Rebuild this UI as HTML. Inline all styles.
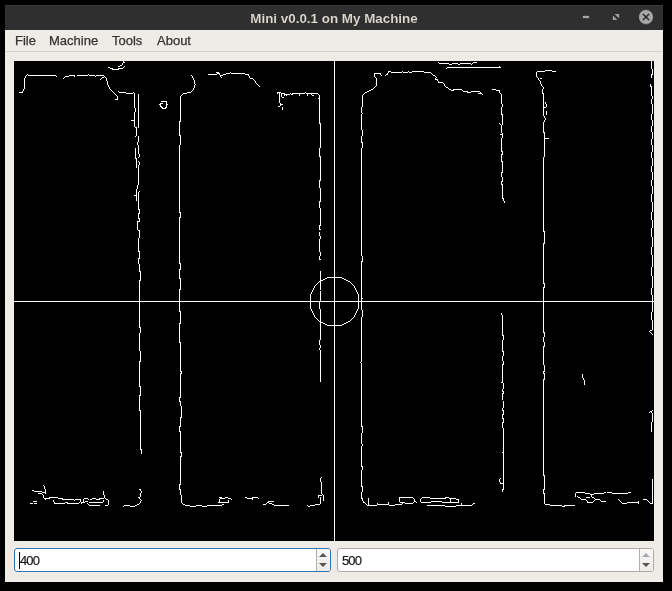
<!DOCTYPE html>
<html><head><meta charset="utf-8">
<style>
html,body{margin:0;padding:0;width:672px;height:591px;background:#000;overflow:hidden;font-family:"Liberation Sans",sans-serif;}
#win{position:absolute;left:5px;top:5px;width:658px;height:577px;background:#efebe7;}
#title{position:absolute;left:0;top:0;width:658px;height:25px;background:#2f2f2f;box-shadow:inset 0 1px 0 #3a3a3a;}
#title .t{position:absolute;left:0;width:658px;top:6px;text-align:center;color:#dfdbd2;font-size:13.4px;font-weight:bold;will-change:transform;-webkit-text-stroke:0.1px #2f2f2f;}
#menu{position:absolute;left:0;top:25px;width:658px;height:21px;border-bottom:1px solid #d6d2cc;}
#menu span{position:absolute;top:3px;font-size:13px;color:#333;-webkit-text-stroke:0.25px #333;will-change:transform;}
#img{position:absolute;left:14px;top:61px;width:640px;height:480px;background:#000;}
#img svg{position:absolute;left:0;top:0;}
.spin{position:absolute;top:548px;height:22px;width:315px;background:#fff;border:1px solid #aca8a3;border-radius:3px;}
.spin .v{position:absolute;left:5px;top:4px;font-size:13px;color:#1a1a1a;letter-spacing:-0.9px;-webkit-text-stroke:0.2px #1a1a1a;will-change:transform;}
.spin .btn{position:absolute;right:0;top:0;width:13px;height:22px;border-left:1px solid #b2aea9;background:linear-gradient(#f9f8f7,#eeece9);border-radius:0 2px 2px 0;}
.up,.dn{position:absolute;left:2px;width:0;height:0;border-left:4px solid transparent;border-right:4px solid transparent;}
.up{top:4px;border-bottom:4px solid #555;}
.dn{top:14px;border-top:4px solid #555;}
.caret{position:absolute;left:4px;top:3px;width:1px;height:17px;background:#000;}
</style></head><body>
<div id="win">
 <div id="title"><div class="t">Mini v0.0.1 on My Machine</div></div>
 <div id="menu"><span style="left:10px">File</span><span style="left:44px">Machine</span><span style="left:107px">Tools</span><span style="left:152px">About</span></div>
</div>
<svg style="position:absolute;left:0;top:0" width="672" height="40" viewBox="0 0 672 40">
<rect x="582.5" y="15.5" width="7" height="3" fill="#a6a6a6" stroke="#262626" stroke-width="0.6"/>
<polygon points="614.6,13.9 619.1,13.9 619.1,18.4" fill="#a3a3a3"/>
<polygon points="612.9,15.6 612.9,20.1 617.4,20.1" fill="#a3a3a3"/>
<circle cx="646" cy="17" r="7.4" fill="#a8a8a8" stroke="#282828" stroke-width="0.6"/>
<line x1="643.2" y1="14.2" x2="648.8" y2="19.8" stroke="#2a2a2a" stroke-width="1.5" stroke-linecap="round"/><line x1="648.8" y1="14.2" x2="643.2" y2="19.8" stroke="#2a2a2a" stroke-width="1.5" stroke-linecap="round"/>
</svg>
<div id="img"><svg width="640" height="480" viewBox="0 0 640 480">
<g fill="#fff" shape-rendering="crispEdges">
<path d="M109 0h1v1h-1zM637 0h1v1h-1zM109 1h2v1h-2zM424 1h1v1h-1zM459 1h4v1h-4zM637 1h1v1h-1zM108 2h1v1h-1zM425 2h10v1h-10zM438 2h6v1h-6zM446 2h11v1h-11zM458 2h1v1h-1zM637 2h1v1h-1zM108 3h1v1h-1zM435 3h3v1h-3zM444 3h2v1h-2zM457 3h1v1h-1zM637 3h1v1h-1zM106 4h2v1h-2zM637 4h1v1h-1zM104 5h2v1h-2zM110 5h1v1h-1zM485 5h1v1h-1zM637 5h1v1h-1zM94 6h2v1h-2zM109 6h1v1h-1zM433 6h54v1h-54zM637 6h1v1h-1zM96 7h3v1h-3zM104 7h5v1h-5zM432 7h1v1h-1zM637 7h1v1h-1zM98 8h7v1h-7zM638 8h1v1h-1zM531 9h7v1h-7zM638 9h1v1h-1zM374 10h3v1h-3zM388 10h1v1h-1zM394 10h1v1h-1zM398 10h12v1h-12zM523 10h8v1h-8zM538 10h4v1h-4zM638 10h1v1h-1zM202 11h3v1h-3zM216 11h1v1h-1zM374 11h1v1h-1zM377 11h11v1h-11zM389 11h5v1h-5zM395 11h3v1h-3zM410 11h7v1h-7zM522 11h1v1h-1zM638 11h1v1h-1zM203 12h3v1h-3zM212 12h4v1h-4zM217 12h14v1h-14zM360 12h7v1h-7zM373 12h1v1h-1zM417 12h1v1h-1zM522 12h1v1h-1zM638 12h1v1h-1zM13 13h1v1h-1zM74 13h1v1h-1zM194 13h9v1h-9zM205 13h1v1h-1zM209 13h3v1h-3zM231 13h4v1h-4zM360 13h1v1h-1zM366 13h1v1h-1zM372 13h2v1h-2zM418 13h1v1h-1zM522 13h1v1h-1zM637 13h2v1h-2zM12 14h1v1h-1zM14 14h28v1h-28zM55 14h6v1h-6zM63 14h11v1h-11zM75 14h6v1h-6zM82 14h8v1h-8zM177 14h1v1h-1zM206 14h3v1h-3zM234 14h1v1h-1zM360 14h1v1h-1zM367 14h1v1h-1zM371 14h1v1h-1zM419 14h2v1h-2zM522 14h1v1h-1zM637 14h1v1h-1zM11 15h1v1h-1zM42 15h1v1h-1zM51 15h4v1h-4zM60 15h1v1h-1zM81 15h1v1h-1zM90 15h1v1h-1zM178 15h1v1h-1zM206 15h1v1h-1zM235 15h1v1h-1zM360 15h1v1h-1zM421 15h1v1h-1zM522 15h1v1h-1zM637 15h1v1h-1zM11 16h1v1h-1zM50 16h1v1h-1zM88 16h2v1h-2zM91 16h1v1h-1zM178 16h1v1h-1zM207 16h1v1h-1zM235 16h1v1h-1zM361 16h1v1h-1zM422 16h1v1h-1zM523 16h1v1h-1zM637 16h1v1h-1zM10 17h1v1h-1zM49 17h1v1h-1zM87 17h1v1h-1zM92 17h1v1h-1zM179 17h1v1h-1zM236 17h3v1h-3zM362 17h1v1h-1zM421 17h1v1h-1zM524 17h1v1h-1zM526 17h2v1h-2zM10 18h1v1h-1zM86 18h1v1h-1zM92 18h1v1h-1zM179 18h1v1h-1zM239 18h1v1h-1zM362 18h1v1h-1zM421 18h3v1h-3zM524 18h1v1h-1zM10 19h1v1h-1zM92 19h1v1h-1zM180 19h1v1h-1zM240 19h1v1h-1zM362 19h1v1h-1zM423 19h1v1h-1zM525 19h1v1h-1zM10 20h1v1h-1zM93 20h1v1h-1zM180 20h1v1h-1zM241 20h1v1h-1zM362 20h1v1h-1zM424 20h1v1h-1zM526 20h1v1h-1zM10 21h1v1h-1zM93 21h1v1h-1zM180 21h1v1h-1zM241 21h1v1h-1zM362 21h1v1h-1zM424 21h5v1h-5zM526 21h1v1h-1zM10 22h1v1h-1zM93 22h1v1h-1zM180 22h1v1h-1zM242 22h1v1h-1zM362 22h1v1h-1zM429 22h1v1h-1zM526 22h1v1h-1zM10 23h1v1h-1zM93 23h1v1h-1zM181 23h1v1h-1zM243 23h1v1h-1zM362 23h1v1h-1zM430 23h1v1h-1zM527 23h1v1h-1zM636 23h1v1h-1zM10 24h1v1h-1zM94 24h1v1h-1zM180 24h1v1h-1zM244 24h1v1h-1zM362 24h1v1h-1zM430 24h1v1h-1zM527 24h1v1h-1zM636 24h1v1h-1zM10 25h1v1h-1zM94 25h1v1h-1zM180 25h1v1h-1zM245 25h1v1h-1zM361 25h1v1h-1zM431 25h1v1h-1zM528 25h1v1h-1zM636 25h2v1h-2zM10 26h1v1h-1zM95 26h1v1h-1zM180 26h1v1h-1zM360 26h1v1h-1zM432 26h2v1h-2zM529 26h1v1h-1zM637 26h1v1h-1zM10 27h1v1h-1zM95 27h1v1h-1zM179 27h1v1h-1zM359 27h1v1h-1zM434 27h1v1h-1zM529 27h1v1h-1zM637 27h1v1h-1zM9 28h1v1h-1zM96 28h1v1h-1zM179 28h1v1h-1zM357 28h2v1h-2zM435 28h2v1h-2zM439 28h9v1h-9zM478 28h4v1h-4zM528 28h1v1h-1zM637 28h1v1h-1zM9 29h1v1h-1zM97 29h1v1h-1zM178 29h1v1h-1zM355 29h2v1h-2zM437 29h3v1h-3zM448 29h1v1h-1zM482 29h4v1h-4zM528 29h1v1h-1zM637 29h1v1h-1zM8 30h1v1h-1zM98 30h1v1h-1zM104 30h1v1h-1zM177 30h1v1h-1zM353 30h2v1h-2zM449 30h5v1h-5zM457 30h9v1h-9zM485 30h1v1h-1zM528 30h1v1h-1zM637 30h1v1h-1zM5 31h4v1h-4zM99 31h1v1h-1zM105 31h7v1h-7zM119 31h1v1h-1zM173 31h4v1h-4zM263 31h4v1h-4zM291 31h1v1h-1zM351 31h2v1h-2zM453 31h4v1h-4zM466 31h1v1h-1zM485 31h1v1h-1zM528 31h1v1h-1zM637 31h1v1h-1zM100 32h1v1h-1zM112 32h7v1h-7zM120 32h1v1h-1zM169 32h4v1h-4zM263 32h1v1h-1zM265 32h1v1h-1zM267 32h4v1h-4zM276 32h1v1h-1zM278 32h13v1h-13zM292 32h12v1h-12zM350 32h1v1h-1zM464 32h4v1h-4zM486 32h1v1h-1zM528 32h2v1h-2zM637 32h1v1h-1zM101 33h1v1h-1zM120 33h1v1h-1zM124 33h1v1h-1zM168 33h1v1h-1zM265 33h1v1h-1zM267 33h1v1h-1zM270 33h6v1h-6zM277 33h2v1h-2zM285 33h1v1h-1zM293 33h1v1h-1zM297 33h1v1h-1zM304 33h1v1h-1zM349 33h1v1h-1zM468 33h1v1h-1zM487 33h1v1h-1zM529 33h1v1h-1zM637 33h1v1h-1zM102 34h1v1h-1zM120 34h1v1h-1zM124 34h1v1h-1zM167 34h1v1h-1zM265 34h1v1h-1zM267 34h1v1h-1zM270 34h1v1h-1zM272 34h1v1h-1zM285 34h1v1h-1zM293 34h1v1h-1zM298 34h2v1h-2zM305 34h1v1h-1zM348 34h1v1h-1zM487 34h1v1h-1zM529 34h1v1h-1zM637 34h1v1h-1zM103 35h1v1h-1zM120 35h1v1h-1zM124 35h1v1h-1zM166 35h1v1h-1zM265 35h1v1h-1zM267 35h1v1h-1zM305 35h1v1h-1zM348 35h1v1h-1zM487 35h1v1h-1zM529 35h1v1h-1zM638 35h1v1h-1zM103 36h1v1h-1zM120 36h1v1h-1zM124 36h1v1h-1zM166 36h1v1h-1zM265 36h1v1h-1zM268 36h2v1h-2zM305 36h1v1h-1zM348 36h1v1h-1zM487 36h1v1h-1zM529 36h1v1h-1zM638 36h1v1h-1zM103 37h1v1h-1zM120 37h1v1h-1zM124 37h1v1h-1zM166 37h1v1h-1zM265 37h1v1h-1zM304 37h2v1h-2zM348 37h1v1h-1zM487 37h1v1h-1zM529 37h1v1h-1zM638 37h1v1h-1zM101 38h3v1h-3zM120 38h1v1h-1zM124 38h1v1h-1zM166 38h1v1h-1zM265 38h1v1h-1zM305 38h1v1h-1zM348 38h1v1h-1zM487 38h1v1h-1zM529 38h1v1h-1zM637 38h1v1h-1zM120 39h1v1h-1zM124 39h1v1h-1zM166 39h1v1h-1zM265 39h1v1h-1zM305 39h1v1h-1zM348 39h1v1h-1zM487 39h1v1h-1zM529 39h1v1h-1zM637 39h1v1h-1zM120 40h1v1h-1zM124 40h1v1h-1zM147 40h6v1h-6zM166 40h1v1h-1zM265 40h1v1h-1zM305 40h1v1h-1zM348 40h1v1h-1zM487 40h1v1h-1zM529 40h1v1h-1zM637 40h1v1h-1zM120 41h1v1h-1zM124 41h1v1h-1zM152 41h1v1h-1zM166 41h1v1h-1zM265 41h1v1h-1zM305 41h1v1h-1zM348 41h1v1h-1zM487 41h1v1h-1zM529 41h1v1h-1zM531 41h1v1h-1zM637 41h1v1h-1zM120 42h1v1h-1zM124 42h1v1h-1zM146 42h3v1h-3zM152 42h1v1h-1zM166 42h1v1h-1zM266 42h1v1h-1zM305 42h1v1h-1zM348 42h1v1h-1zM487 42h1v1h-1zM529 42h1v1h-1zM531 42h1v1h-1zM637 42h1v1h-1zM120 43h1v1h-1zM124 43h1v1h-1zM145 43h2v1h-2zM152 43h2v1h-2zM166 43h1v1h-1zM266 43h3v1h-3zM305 43h1v1h-1zM348 43h1v1h-1zM488 43h1v1h-1zM529 43h1v1h-1zM532 43h1v1h-1zM638 43h1v1h-1zM120 44h1v1h-1zM124 44h1v1h-1zM146 44h1v1h-1zM152 44h1v1h-1zM166 44h1v1h-1zM266 44h1v1h-1zM305 44h1v1h-1zM348 44h1v1h-1zM488 44h1v1h-1zM529 44h1v1h-1zM532 44h1v1h-1zM638 44h1v1h-1zM120 45h1v1h-1zM124 45h1v1h-1zM146 45h2v1h-2zM152 45h1v1h-1zM166 45h1v1h-1zM264 45h2v1h-2zM305 45h1v1h-1zM348 45h1v1h-1zM488 45h1v1h-1zM529 45h1v1h-1zM532 45h1v1h-1zM638 45h1v1h-1zM120 46h1v1h-1zM124 46h1v1h-1zM147 46h2v1h-2zM151 46h2v1h-2zM166 46h1v1h-1zM268 46h1v1h-1zM305 46h1v1h-1zM347 46h1v1h-1zM487 46h1v1h-1zM529 46h3v1h-3zM638 46h1v1h-1zM121 47h1v1h-1zM124 47h1v1h-1zM148 47h4v1h-4zM166 47h1v1h-1zM268 47h1v1h-1zM305 47h1v1h-1zM347 47h1v1h-1zM487 47h1v1h-1zM529 47h1v1h-1zM638 47h1v1h-1zM121 48h1v1h-1zM124 48h1v1h-1zM166 48h1v1h-1zM268 48h1v1h-1zM305 48h1v1h-1zM347 48h1v1h-1zM487 48h1v1h-1zM529 48h1v1h-1zM638 48h1v1h-1zM121 49h1v1h-1zM124 49h1v1h-1zM166 49h1v1h-1zM305 49h1v1h-1zM347 49h1v1h-1zM487 49h1v1h-1zM529 49h1v1h-1zM638 49h1v1h-1zM121 50h1v1h-1zM124 50h1v1h-1zM166 50h1v1h-1zM305 50h1v1h-1zM347 50h1v1h-1zM487 50h1v1h-1zM529 50h1v1h-1zM532 50h1v1h-1zM638 50h1v1h-1zM120 51h1v1h-1zM124 51h1v1h-1zM166 51h1v1h-1zM305 51h1v1h-1zM347 51h1v1h-1zM487 51h1v1h-1zM529 51h1v1h-1zM532 51h1v1h-1zM638 51h1v1h-1zM120 52h1v1h-1zM124 52h1v1h-1zM166 52h1v1h-1zM305 52h1v1h-1zM348 52h1v1h-1zM487 52h1v1h-1zM529 52h1v1h-1zM532 52h1v1h-1zM638 52h1v1h-1zM120 53h1v1h-1zM124 53h1v1h-1zM166 53h1v1h-1zM305 53h1v1h-1zM347 53h1v1h-1zM487 53h2v1h-2zM529 53h1v1h-1zM532 53h1v1h-1zM637 53h1v1h-1zM120 54h1v1h-1zM124 54h1v1h-1zM166 54h1v1h-1zM305 54h1v1h-1zM347 54h1v1h-1zM488 54h1v1h-1zM529 54h1v1h-1zM637 54h1v1h-1zM120 55h1v1h-1zM124 55h1v1h-1zM166 55h1v1h-1zM305 55h1v1h-1zM347 55h1v1h-1zM488 55h1v1h-1zM530 55h1v1h-1zM637 55h1v1h-1zM120 56h1v1h-1zM124 56h1v1h-1zM166 56h1v1h-1zM305 56h1v1h-1zM347 56h1v1h-1zM488 56h1v1h-1zM530 56h1v1h-1zM637 56h1v1h-1zM120 57h1v1h-1zM124 57h1v1h-1zM166 57h1v1h-1zM305 57h1v1h-1zM347 57h1v1h-1zM488 57h1v1h-1zM531 57h1v1h-1zM637 57h1v1h-1zM120 58h1v1h-1zM124 58h1v1h-1zM166 58h1v1h-1zM305 58h1v1h-1zM347 58h1v1h-1zM488 58h1v1h-1zM531 58h1v1h-1zM637 58h1v1h-1zM117 59h4v1h-4zM124 59h1v1h-1zM166 59h1v1h-1zM305 59h1v1h-1zM347 59h1v1h-1zM488 59h1v1h-1zM530 59h1v1h-1zM638 59h1v1h-1zM120 60h1v1h-1zM124 60h1v1h-1zM165 60h2v1h-2zM305 60h1v1h-1zM347 60h1v1h-1zM488 60h1v1h-1zM530 60h1v1h-1zM638 60h1v1h-1zM120 61h1v1h-1zM124 61h1v1h-1zM165 61h1v1h-1zM305 61h1v1h-1zM347 61h1v1h-1zM488 61h1v1h-1zM529 61h1v1h-1zM638 61h1v1h-1zM120 62h1v1h-1zM124 62h1v1h-1zM165 62h1v1h-1zM305 62h2v1h-2zM347 62h1v1h-1zM485 62h1v1h-1zM488 62h1v1h-1zM529 62h1v1h-1zM638 62h1v1h-1zM120 63h1v1h-1zM124 63h1v1h-1zM165 63h1v1h-1zM306 63h1v1h-1zM347 63h1v1h-1zM486 63h1v1h-1zM488 63h1v1h-1zM529 63h1v1h-1zM638 63h1v1h-1zM120 64h1v1h-1zM124 64h1v1h-1zM165 64h1v1h-1zM306 64h1v1h-1zM347 64h1v1h-1zM487 64h1v1h-1zM529 64h1v1h-1zM638 64h1v1h-1zM120 65h1v1h-1zM124 65h1v1h-1zM165 65h1v1h-1zM306 65h1v1h-1zM347 65h1v1h-1zM487 65h1v1h-1zM529 65h1v1h-1zM637 65h1v1h-1zM121 66h2v1h-2zM124 66h1v1h-1zM165 66h1v1h-1zM306 66h1v1h-1zM347 66h1v1h-1zM487 66h1v1h-1zM529 66h1v1h-1zM637 66h1v1h-1zM122 67h1v1h-1zM165 67h1v1h-1zM306 67h1v1h-1zM347 67h1v1h-1zM487 67h1v1h-1zM529 67h1v1h-1zM637 67h1v1h-1zM122 68h1v1h-1zM165 68h1v1h-1zM306 68h1v1h-1zM347 68h1v1h-1zM487 68h1v1h-1zM529 68h1v1h-1zM637 68h1v1h-1zM122 69h1v1h-1zM165 69h1v1h-1zM306 69h1v1h-1zM348 69h1v1h-1zM487 69h1v1h-1zM529 69h1v1h-1zM637 69h1v1h-1zM122 70h1v1h-1zM165 70h1v1h-1zM306 70h1v1h-1zM348 70h1v1h-1zM487 70h1v1h-1zM529 70h1v1h-1zM637 70h1v1h-1zM122 71h1v1h-1zM165 71h1v1h-1zM306 71h1v1h-1zM348 71h1v1h-1zM487 71h1v1h-1zM529 71h2v1h-2zM638 71h1v1h-1zM122 72h1v1h-1zM165 72h1v1h-1zM306 72h1v1h-1zM348 72h1v1h-1zM488 72h1v1h-1zM530 72h1v1h-1zM638 72h1v1h-1zM122 73h1v1h-1zM165 73h1v1h-1zM306 73h1v1h-1zM348 73h1v1h-1zM486 73h3v1h-3zM530 73h1v1h-1zM638 73h1v1h-1zM122 74h1v1h-1zM165 74h2v1h-2zM306 74h1v1h-1zM348 74h1v1h-1zM488 74h1v1h-1zM530 74h1v1h-1zM638 74h1v1h-1zM121 75h1v1h-1zM124 75h1v1h-1zM166 75h1v1h-1zM306 75h1v1h-1zM347 75h1v1h-1zM488 75h1v1h-1zM530 75h1v1h-1zM638 75h1v1h-1zM124 76h1v1h-1zM166 76h1v1h-1zM306 76h1v1h-1zM347 76h1v1h-1zM488 76h1v1h-1zM530 76h1v1h-1zM638 76h1v1h-1zM124 77h1v1h-1zM166 77h1v1h-1zM306 77h1v1h-1zM347 77h1v1h-1zM487 77h1v1h-1zM530 77h5v1h-5zM638 77h1v1h-1zM124 78h1v1h-1zM166 78h1v1h-1zM306 78h1v1h-1zM347 78h1v1h-1zM487 78h1v1h-1zM530 78h1v1h-1zM637 78h1v1h-1zM124 79h1v1h-1zM166 79h1v1h-1zM306 79h1v1h-1zM347 79h1v1h-1zM487 79h1v1h-1zM530 79h1v1h-1zM637 79h1v1h-1zM124 80h1v1h-1zM166 80h1v1h-1zM306 80h1v1h-1zM347 80h1v1h-1zM487 80h1v1h-1zM530 80h1v1h-1zM637 80h1v1h-1zM123 81h1v1h-1zM166 81h1v1h-1zM306 81h1v1h-1zM347 81h2v1h-2zM487 81h1v1h-1zM530 81h1v1h-1zM637 81h1v1h-1zM123 82h1v1h-1zM166 82h1v1h-1zM306 82h1v1h-1zM348 82h1v1h-1zM487 82h1v1h-1zM530 82h1v1h-1zM637 82h1v1h-1zM123 83h1v1h-1zM166 83h1v1h-1zM306 83h1v1h-1zM348 83h1v1h-1zM487 83h1v1h-1zM530 83h1v1h-1zM637 83h1v1h-1zM124 84h1v1h-1zM165 84h1v1h-1zM306 84h1v1h-1zM348 84h1v1h-1zM487 84h1v1h-1zM530 84h1v1h-1zM638 84h1v1h-1zM124 85h1v1h-1zM165 85h1v1h-1zM306 85h1v1h-1zM348 85h1v1h-1zM487 85h1v1h-1zM530 85h1v1h-1zM638 85h1v1h-1zM124 86h1v1h-1zM165 86h1v1h-1zM306 86h1v1h-1zM348 86h1v1h-1zM487 86h1v1h-1zM530 86h1v1h-1zM638 86h1v1h-1zM121 87h1v1h-1zM124 87h1v1h-1zM165 87h1v1h-1zM305 87h1v1h-1zM347 87h1v1h-1zM487 87h1v1h-1zM530 87h1v1h-1zM638 87h1v1h-1zM121 88h1v1h-1zM124 88h1v1h-1zM165 88h1v1h-1zM305 88h1v1h-1zM347 88h1v1h-1zM487 88h1v1h-1zM530 88h1v1h-1zM638 88h1v1h-1zM121 89h1v1h-1zM124 89h1v1h-1zM165 89h1v1h-1zM305 89h1v1h-1zM347 89h1v1h-1zM487 89h1v1h-1zM530 89h1v1h-1zM638 89h1v1h-1zM121 90h1v1h-1zM124 90h1v1h-1zM165 90h1v1h-1zM305 90h1v1h-1zM347 90h1v1h-1zM487 90h2v1h-2zM530 90h1v1h-1zM638 90h1v1h-1zM121 91h1v1h-1zM124 91h1v1h-1zM165 91h1v1h-1zM305 91h1v1h-1zM347 91h1v1h-1zM488 91h1v1h-1zM530 91h1v1h-1zM637 91h1v1h-1zM121 92h1v1h-1zM124 92h1v1h-1zM165 92h1v1h-1zM305 92h1v1h-1zM347 92h1v1h-1zM488 92h1v1h-1zM530 92h1v1h-1zM637 92h1v1h-1zM121 93h1v1h-1zM125 93h1v1h-1zM165 93h1v1h-1zM305 93h1v1h-1zM347 93h1v1h-1zM487 93h2v1h-2zM530 93h1v1h-1zM637 93h1v1h-1zM121 94h1v1h-1zM125 94h1v1h-1zM165 94h1v1h-1zM305 94h1v1h-1zM347 94h1v1h-1zM487 94h1v1h-1zM530 94h1v1h-1zM637 94h1v1h-1zM121 95h1v1h-1zM125 95h1v1h-1zM165 95h1v1h-1zM305 95h2v1h-2zM347 95h1v1h-1zM487 95h1v1h-1zM530 95h1v1h-1zM637 95h1v1h-1zM121 96h1v1h-1zM124 96h1v1h-1zM165 96h1v1h-1zM306 96h1v1h-1zM347 96h1v1h-1zM487 96h1v1h-1zM529 96h1v1h-1zM637 96h1v1h-1zM121 97h2v1h-2zM165 97h1v1h-1zM306 97h1v1h-1zM347 97h1v1h-1zM487 97h1v1h-1zM529 97h1v1h-1zM638 97h1v1h-1zM122 98h1v1h-1zM165 98h1v1h-1zM306 98h1v1h-1zM347 98h1v1h-1zM487 98h1v1h-1zM529 98h1v1h-1zM638 98h1v1h-1zM122 99h1v1h-1zM165 99h1v1h-1zM306 99h1v1h-1zM347 99h1v1h-1zM487 99h1v1h-1zM529 99h1v1h-1zM638 99h1v1h-1zM122 100h1v1h-1zM124 100h1v1h-1zM165 100h1v1h-1zM306 100h1v1h-1zM347 100h1v1h-1zM487 100h2v1h-2zM529 100h1v1h-1zM638 100h1v1h-1zM122 101h1v1h-1zM125 101h1v1h-1zM165 101h1v1h-1zM306 101h1v1h-1zM347 101h1v1h-1zM488 101h1v1h-1zM529 101h1v1h-1zM638 101h1v1h-1zM122 102h1v1h-1zM125 102h1v1h-1zM165 102h1v1h-1zM306 102h1v1h-1zM347 102h1v1h-1zM488 102h1v1h-1zM529 102h1v1h-1zM638 102h1v1h-1zM122 103h1v1h-1zM125 103h1v1h-1zM165 103h1v1h-1zM306 103h1v1h-1zM347 103h1v1h-1zM488 103h1v1h-1zM529 103h1v1h-1zM638 103h1v1h-1zM122 104h1v1h-1zM124 104h1v1h-1zM165 104h1v1h-1zM306 104h1v1h-1zM347 104h1v1h-1zM488 104h1v1h-1zM529 104h1v1h-1zM638 104h1v1h-1zM122 105h1v1h-1zM124 105h1v1h-1zM165 105h1v1h-1zM306 105h1v1h-1zM347 105h1v1h-1zM488 105h1v1h-1zM529 105h1v1h-1zM637 105h1v1h-1zM122 106h1v1h-1zM124 106h1v1h-1zM165 106h1v1h-1zM306 106h1v1h-1zM347 106h1v1h-1zM488 106h1v1h-1zM529 106h1v1h-1zM637 106h1v1h-1zM124 107h1v1h-1zM165 107h1v1h-1zM306 107h1v1h-1zM347 107h1v1h-1zM488 107h1v1h-1zM529 107h1v1h-1zM637 107h1v1h-1zM124 108h1v1h-1zM165 108h1v1h-1zM306 108h1v1h-1zM347 108h1v1h-1zM488 108h1v1h-1zM529 108h1v1h-1zM637 108h1v1h-1zM124 109h1v1h-1zM165 109h1v1h-1zM306 109h1v1h-1zM347 109h1v1h-1zM488 109h1v1h-1zM529 109h1v1h-1zM637 109h1v1h-1zM124 110h1v1h-1zM165 110h1v1h-1zM306 110h1v1h-1zM347 110h1v1h-1zM488 110h1v1h-1zM529 110h1v1h-1zM637 110h1v1h-1zM124 111h1v1h-1zM165 111h1v1h-1zM306 111h1v1h-1zM347 111h1v1h-1zM487 111h2v1h-2zM529 111h1v1h-1zM638 111h1v1h-1zM124 112h1v1h-1zM165 112h1v1h-1zM306 112h1v1h-1zM347 112h1v1h-1zM487 112h1v1h-1zM529 112h1v1h-1zM638 112h1v1h-1zM124 113h1v1h-1zM165 113h1v1h-1zM306 113h1v1h-1zM347 113h1v1h-1zM487 113h1v1h-1zM529 113h1v1h-1zM638 113h1v1h-1zM124 114h1v1h-1zM165 114h1v1h-1zM306 114h1v1h-1zM347 114h1v1h-1zM487 114h1v1h-1zM529 114h1v1h-1zM638 114h1v1h-1zM124 115h1v1h-1zM165 115h1v1h-1zM306 115h1v1h-1zM347 115h1v1h-1zM487 115h1v1h-1zM529 115h1v1h-1zM638 115h1v1h-1zM124 116h1v1h-1zM165 116h1v1h-1zM306 116h1v1h-1zM347 116h1v1h-1zM488 116h1v1h-1zM529 116h1v1h-1zM638 116h1v1h-1zM124 117h1v1h-1zM165 117h1v1h-1zM306 117h1v1h-1zM347 117h1v1h-1zM488 117h1v1h-1zM529 117h1v1h-1zM638 117h1v1h-1zM124 118h1v1h-1zM165 118h1v1h-1zM306 118h1v1h-1zM347 118h1v1h-1zM488 118h1v1h-1zM529 118h1v1h-1zM638 118h1v1h-1zM124 119h1v1h-1zM165 119h1v1h-1zM305 119h2v1h-2zM347 119h1v1h-1zM488 119h1v1h-1zM529 119h1v1h-1zM637 119h1v1h-1zM124 120h1v1h-1zM165 120h1v1h-1zM305 120h1v1h-1zM347 120h1v1h-1zM487 120h2v1h-2zM529 120h1v1h-1zM637 120h1v1h-1zM124 121h1v1h-1zM165 121h1v1h-1zM305 121h1v1h-1zM347 121h1v1h-1zM487 121h1v1h-1zM529 121h1v1h-1zM637 121h1v1h-1zM124 122h1v1h-1zM165 122h1v1h-1zM305 122h1v1h-1zM347 122h1v1h-1zM487 122h1v1h-1zM529 122h1v1h-1zM637 122h1v1h-1zM124 123h1v1h-1zM165 123h1v1h-1zM305 123h1v1h-1zM347 123h1v1h-1zM487 123h2v1h-2zM529 123h1v1h-1zM637 123h1v1h-1zM123 124h1v1h-1zM165 124h1v1h-1zM305 124h1v1h-1zM347 124h1v1h-1zM488 124h1v1h-1zM529 124h1v1h-1zM637 124h1v1h-1zM123 125h1v1h-1zM165 125h1v1h-1zM305 125h1v1h-1zM347 125h1v1h-1zM488 125h1v1h-1zM529 125h1v1h-1zM638 125h1v1h-1zM123 126h1v1h-1zM165 126h1v1h-1zM305 126h1v1h-1zM347 126h1v1h-1zM488 126h1v1h-1zM529 126h1v1h-1zM638 126h1v1h-1zM123 127h1v1h-1zM165 127h1v1h-1zM306 127h1v1h-1zM347 127h1v1h-1zM488 127h1v1h-1zM529 127h1v1h-1zM638 127h1v1h-1zM122 128h1v1h-1zM165 128h1v1h-1zM306 128h1v1h-1zM347 128h1v1h-1zM488 128h1v1h-1zM529 128h1v1h-1zM638 128h1v1h-1zM122 129h1v1h-1zM165 129h1v1h-1zM306 129h1v1h-1zM347 129h1v1h-1zM488 129h1v1h-1zM529 129h1v1h-1zM638 129h1v1h-1zM122 130h1v1h-1zM125 130h1v1h-1zM165 130h1v1h-1zM306 130h1v1h-1zM347 130h1v1h-1zM488 130h1v1h-1zM529 130h1v1h-1zM638 130h1v1h-1zM122 131h1v1h-1zM124 131h1v1h-1zM165 131h1v1h-1zM306 131h1v1h-1zM347 131h1v1h-1zM488 131h1v1h-1zM529 131h1v1h-1zM638 131h1v1h-1zM122 132h1v1h-1zM124 132h1v1h-1zM165 132h1v1h-1zM306 132h1v1h-1zM347 132h1v1h-1zM488 132h1v1h-1zM529 132h1v1h-1zM638 132h1v1h-1zM122 133h1v1h-1zM124 133h1v1h-1zM165 133h1v1h-1zM306 133h1v1h-1zM347 133h1v1h-1zM488 133h1v1h-1zM529 133h1v1h-1zM637 133h1v1h-1zM120 134h3v1h-3zM124 134h1v1h-1zM165 134h1v1h-1zM306 134h1v1h-1zM347 134h1v1h-1zM488 134h1v1h-1zM529 134h1v1h-1zM637 134h1v1h-1zM122 135h1v1h-1zM124 135h1v1h-1zM165 135h1v1h-1zM306 135h1v1h-1zM347 135h1v1h-1zM488 135h1v1h-1zM529 135h1v1h-1zM637 135h1v1h-1zM122 136h1v1h-1zM124 136h1v1h-1zM165 136h1v1h-1zM306 136h1v1h-1zM347 136h1v1h-1zM488 136h1v1h-1zM529 136h1v1h-1zM637 136h1v1h-1zM122 137h1v1h-1zM124 137h1v1h-1zM165 137h1v1h-1zM306 137h1v1h-1zM347 137h1v1h-1zM488 137h2v1h-2zM529 137h1v1h-1zM637 137h1v1h-1zM122 138h1v1h-1zM124 138h1v1h-1zM165 138h1v1h-1zM306 138h1v1h-1zM347 138h1v1h-1zM489 138h1v1h-1zM529 138h1v1h-1zM637 138h1v1h-1zM122 139h1v1h-1zM124 139h1v1h-1zM165 139h1v1h-1zM306 139h1v1h-1zM347 139h1v1h-1zM489 139h1v1h-1zM529 139h1v1h-1zM637 139h1v1h-1zM124 140h1v1h-1zM165 140h1v1h-1zM305 140h2v1h-2zM347 140h1v1h-1zM490 140h1v1h-1zM529 140h1v1h-1zM637 140h1v1h-1zM124 141h1v1h-1zM165 141h1v1h-1zM305 141h1v1h-1zM347 141h1v1h-1zM490 141h1v1h-1zM529 141h1v1h-1zM638 141h1v1h-1zM124 142h1v1h-1zM165 142h1v1h-1zM305 142h1v1h-1zM347 142h1v1h-1zM529 142h1v1h-1zM638 142h1v1h-1zM124 143h1v1h-1zM165 143h1v1h-1zM305 143h1v1h-1zM347 143h1v1h-1zM529 143h1v1h-1zM638 143h1v1h-1zM124 144h1v1h-1zM165 144h1v1h-1zM305 144h1v1h-1zM347 144h1v1h-1zM529 144h1v1h-1zM638 144h1v1h-1zM124 145h1v1h-1zM165 145h1v1h-1zM305 145h1v1h-1zM347 145h1v1h-1zM529 145h1v1h-1zM638 145h1v1h-1zM124 146h1v1h-1zM165 146h1v1h-1zM305 146h1v1h-1zM347 146h1v1h-1zM529 146h1v1h-1zM638 146h1v1h-1zM124 147h1v1h-1zM165 147h1v1h-1zM306 147h1v1h-1zM347 147h1v1h-1zM529 147h1v1h-1zM638 147h1v1h-1zM124 148h2v1h-2zM165 148h1v1h-1zM306 148h1v1h-1zM347 148h1v1h-1zM529 148h1v1h-1zM638 148h1v1h-1zM125 149h1v1h-1zM165 149h1v1h-1zM306 149h1v1h-1zM347 149h1v1h-1zM529 149h1v1h-1zM638 149h1v1h-1zM125 150h1v1h-1zM165 150h1v1h-1zM306 150h1v1h-1zM347 150h1v1h-1zM529 150h1v1h-1zM638 150h1v1h-1zM125 151h1v1h-1zM165 151h2v1h-2zM306 151h1v1h-1zM347 151h1v1h-1zM529 151h1v1h-1zM637 151h1v1h-1zM124 152h2v1h-2zM166 152h1v1h-1zM306 152h1v1h-1zM347 152h1v1h-1zM529 152h1v1h-1zM637 152h1v1h-1zM124 153h1v1h-1zM166 153h1v1h-1zM306 153h1v1h-1zM347 153h1v1h-1zM529 153h1v1h-1zM637 153h1v1h-1zM124 154h1v1h-1zM166 154h1v1h-1zM306 154h1v1h-1zM347 154h1v1h-1zM529 154h1v1h-1zM637 154h1v1h-1zM124 155h1v1h-1zM166 155h1v1h-1zM306 155h1v1h-1zM347 155h1v1h-1zM529 155h1v1h-1zM637 155h1v1h-1zM124 156h1v1h-1zM165 156h2v1h-2zM306 156h1v1h-1zM347 156h1v1h-1zM529 156h1v1h-1zM637 156h1v1h-1zM124 157h2v1h-2zM165 157h1v1h-1zM306 157h1v1h-1zM347 157h1v1h-1zM529 157h1v1h-1zM637 157h1v1h-1zM125 158h1v1h-1zM165 158h1v1h-1zM306 158h1v1h-1zM347 158h1v1h-1zM529 158h1v1h-1zM637 158h1v1h-1zM125 159h1v1h-1zM165 159h1v1h-1zM306 159h1v1h-1zM347 159h1v1h-1zM529 159h1v1h-1zM638 159h1v1h-1zM123 160h3v1h-3zM165 160h1v1h-1zM306 160h1v1h-1zM347 160h1v1h-1zM529 160h1v1h-1zM638 160h1v1h-1zM123 161h1v1h-1zM165 161h1v1h-1zM306 161h1v1h-1zM347 161h1v1h-1zM529 161h1v1h-1zM638 161h1v1h-1zM123 162h1v1h-1zM165 162h1v1h-1zM306 162h1v1h-1zM347 162h1v1h-1zM529 162h1v1h-1zM638 162h1v1h-1zM123 163h1v1h-1zM165 163h1v1h-1zM306 163h1v1h-1zM347 163h1v1h-1zM529 163h1v1h-1zM638 163h1v1h-1zM123 164h1v1h-1zM165 164h1v1h-1zM305 164h2v1h-2zM347 164h1v1h-1zM529 164h1v1h-1zM638 164h1v1h-1zM123 165h1v1h-1zM165 165h1v1h-1zM305 165h1v1h-1zM347 165h1v1h-1zM529 165h1v1h-1zM638 165h1v1h-1zM123 166h1v1h-1zM165 166h1v1h-1zM305 166h1v1h-1zM347 166h1v1h-1zM529 166h1v1h-1zM638 166h1v1h-1zM123 167h1v1h-1zM165 167h1v1h-1zM305 167h1v1h-1zM347 167h1v1h-1zM529 167h1v1h-1zM637 167h1v1h-1zM123 168h1v1h-1zM165 168h1v1h-1zM305 168h2v1h-2zM347 168h1v1h-1zM529 168h1v1h-1zM637 168h1v1h-1zM124 169h2v1h-2zM165 169h1v1h-1zM347 169h1v1h-1zM529 169h1v1h-1zM637 169h1v1h-1zM125 170h1v1h-1zM165 170h1v1h-1zM347 170h1v1h-1zM529 170h2v1h-2zM637 170h1v1h-1zM125 171h1v1h-1zM165 171h1v1h-1zM305 171h1v1h-1zM347 171h1v1h-1zM530 171h1v1h-1zM637 171h1v1h-1zM125 172h1v1h-1zM165 172h1v1h-1zM305 172h1v1h-1zM347 172h1v1h-1zM530 172h1v1h-1zM637 172h1v1h-1zM125 173h1v1h-1zM165 173h1v1h-1zM305 173h1v1h-1zM347 173h1v1h-1zM530 173h1v1h-1zM637 173h1v1h-1zM125 174h1v1h-1zM165 174h1v1h-1zM305 174h1v1h-1zM347 174h1v1h-1zM530 174h1v1h-1zM637 174h1v1h-1zM125 175h1v1h-1zM165 175h1v1h-1zM306 175h1v1h-1zM347 175h1v1h-1zM530 175h1v1h-1zM637 175h1v1h-1zM125 176h1v1h-1zM165 176h1v1h-1zM306 176h1v1h-1zM347 176h1v1h-1zM530 176h1v1h-1zM638 176h1v1h-1zM124 177h1v1h-1zM165 177h1v1h-1zM306 177h1v1h-1zM347 177h1v1h-1zM530 177h1v1h-1zM638 177h1v1h-1zM124 178h1v1h-1zM165 178h1v1h-1zM305 178h1v1h-1zM347 178h1v1h-1zM530 178h1v1h-1zM638 178h1v1h-1zM124 179h1v1h-1zM165 179h1v1h-1zM305 179h1v1h-1zM347 179h1v1h-1zM530 179h1v1h-1zM638 179h1v1h-1zM124 180h1v1h-1zM165 180h1v1h-1zM305 180h1v1h-1zM347 180h1v1h-1zM530 180h1v1h-1zM638 180h1v1h-1zM124 181h1v1h-1zM165 181h1v1h-1zM305 181h1v1h-1zM347 181h1v1h-1zM530 181h1v1h-1zM638 181h1v1h-1zM124 182h1v1h-1zM165 182h1v1h-1zM305 182h1v1h-1zM347 182h1v1h-1zM529 182h2v1h-2zM638 182h1v1h-1zM124 183h1v1h-1zM165 183h1v1h-1zM305 183h1v1h-1zM347 183h1v1h-1zM529 183h1v1h-1zM638 183h1v1h-1zM124 184h1v1h-1zM165 184h1v1h-1zM305 184h1v1h-1zM347 184h1v1h-1zM529 184h1v1h-1zM638 184h1v1h-1zM124 185h1v1h-1zM165 185h1v1h-1zM305 185h1v1h-1zM347 185h1v1h-1zM529 185h1v1h-1zM638 185h1v1h-1zM124 186h1v1h-1zM165 186h1v1h-1zM305 186h1v1h-1zM347 186h1v1h-1zM529 186h1v1h-1zM637 186h1v1h-1zM124 187h1v1h-1zM165 187h1v1h-1zM305 187h1v1h-1zM347 187h1v1h-1zM529 187h1v1h-1zM637 187h1v1h-1zM124 188h1v1h-1zM165 188h1v1h-1zM305 188h1v1h-1zM347 188h1v1h-1zM529 188h1v1h-1zM637 188h1v1h-1zM124 189h1v1h-1zM165 189h1v1h-1zM305 189h1v1h-1zM347 189h1v1h-1zM529 189h1v1h-1zM637 189h1v1h-1zM124 190h2v1h-2zM165 190h1v1h-1zM305 190h1v1h-1zM347 190h1v1h-1zM529 190h1v1h-1zM637 190h1v1h-1zM125 191h1v1h-1zM165 191h1v1h-1zM306 191h1v1h-1zM347 191h1v1h-1zM529 191h1v1h-1zM637 191h1v1h-1zM125 192h1v1h-1zM165 192h1v1h-1zM306 192h1v1h-1zM347 192h1v1h-1zM529 192h1v1h-1zM637 192h1v1h-1zM125 193h1v1h-1zM165 193h1v1h-1zM306 193h1v1h-1zM347 193h1v1h-1zM529 193h1v1h-1zM637 193h1v1h-1zM125 194h1v1h-1zM165 194h1v1h-1zM306 194h1v1h-1zM347 194h1v1h-1zM529 194h1v1h-1zM638 194h1v1h-1zM125 195h1v1h-1zM165 195h1v1h-1zM305 195h1v1h-1zM348 195h1v1h-1zM529 195h1v1h-1zM638 195h1v1h-1zM125 196h1v1h-1zM165 196h1v1h-1zM305 196h1v1h-1zM348 196h1v1h-1zM529 196h1v1h-1zM638 196h1v1h-1zM124 197h2v1h-2zM165 197h1v1h-1zM305 197h1v1h-1zM348 197h1v1h-1zM529 197h1v1h-1zM638 197h1v1h-1zM124 198h1v1h-1zM165 198h1v1h-1zM305 198h2v1h-2zM348 198h1v1h-1zM529 198h1v1h-1zM638 198h1v1h-1zM124 199h1v1h-1zM165 199h1v1h-1zM348 199h1v1h-1zM529 199h1v1h-1zM638 199h1v1h-1zM124 200h1v1h-1zM165 200h1v1h-1zM347 200h2v1h-2zM529 200h1v1h-1zM638 200h1v1h-1zM124 201h1v1h-1zM165 201h1v1h-1zM347 201h1v1h-1zM529 201h1v1h-1zM638 201h1v1h-1zM124 202h1v1h-1zM165 202h2v1h-2zM347 202h1v1h-1zM529 202h1v1h-1zM638 202h1v1h-1zM125 203h1v1h-1zM166 203h1v1h-1zM347 203h1v1h-1zM529 203h1v1h-1zM638 203h1v1h-1zM125 204h1v1h-1zM166 204h1v1h-1zM347 204h1v1h-1zM529 204h1v1h-1zM638 204h1v1h-1zM125 205h1v1h-1zM166 205h1v1h-1zM347 205h1v1h-1zM529 205h1v1h-1zM638 205h1v1h-1zM125 206h1v1h-1zM166 206h1v1h-1zM347 206h1v1h-1zM529 206h1v1h-1zM637 206h1v1h-1zM125 207h1v1h-1zM166 207h1v1h-1zM347 207h1v1h-1zM529 207h1v1h-1zM637 207h1v1h-1zM125 208h1v1h-1zM165 208h2v1h-2zM347 208h1v1h-1zM529 208h1v1h-1zM637 208h1v1h-1zM125 209h1v1h-1zM165 209h1v1h-1zM347 209h1v1h-1zM529 209h1v1h-1zM637 209h1v1h-1zM125 210h2v1h-2zM165 210h1v1h-1zM306 210h1v1h-1zM347 210h1v1h-1zM529 210h1v1h-1zM637 210h1v1h-1zM126 211h1v1h-1zM165 211h1v1h-1zM306 211h1v1h-1zM347 211h1v1h-1zM529 211h1v1h-1zM637 211h1v1h-1zM126 212h1v1h-1zM165 212h1v1h-1zM306 212h1v1h-1zM347 212h1v1h-1zM529 212h1v1h-1zM637 212h1v1h-1zM126 213h1v1h-1zM165 213h1v1h-1zM306 213h1v1h-1zM347 213h1v1h-1zM529 213h1v1h-1zM637 213h1v1h-1zM126 214h1v1h-1zM165 214h1v1h-1zM306 214h1v1h-1zM347 214h1v1h-1zM529 214h1v1h-1zM637 214h1v1h-1zM126 215h1v1h-1zM165 215h1v1h-1zM306 215h1v1h-1zM347 215h1v1h-1zM529 215h1v1h-1zM638 215h1v1h-1zM126 216h1v1h-1zM165 216h1v1h-1zM306 216h1v1h-1zM313 216h15v1h-15zM347 216h1v1h-1zM529 216h1v1h-1zM638 216h1v1h-1zM126 217h1v1h-1zM165 217h2v1h-2zM306 217h1v1h-1zM311 217h2v1h-2zM328 217h2v1h-2zM347 217h1v1h-1zM529 217h1v1h-1zM638 217h1v1h-1zM126 218h1v1h-1zM166 218h1v1h-1zM306 218h1v1h-1zM309 218h2v1h-2zM330 218h2v1h-2zM347 218h1v1h-1zM529 218h1v1h-1zM638 218h1v1h-1zM125 219h2v1h-2zM166 219h1v1h-1zM306 219h3v1h-3zM332 219h2v1h-2zM347 219h1v1h-1zM529 219h1v1h-1zM638 219h1v1h-1zM125 220h1v1h-1zM166 220h1v1h-1zM305 220h2v1h-2zM334 220h2v1h-2zM347 220h1v1h-1zM529 220h1v1h-1zM638 220h1v1h-1zM125 221h1v1h-1zM166 221h1v1h-1zM304 221h1v1h-1zM306 221h1v1h-1zM336 221h1v1h-1zM347 221h1v1h-1zM529 221h1v1h-1zM638 221h1v1h-1zM125 222h1v1h-1zM166 222h1v1h-1zM303 222h1v1h-1zM306 222h1v1h-1zM337 222h1v1h-1zM347 222h1v1h-1zM529 222h2v1h-2zM638 222h1v1h-1zM125 223h1v1h-1zM166 223h1v1h-1zM302 223h1v1h-1zM306 223h1v1h-1zM338 223h1v1h-1zM347 223h1v1h-1zM530 223h1v1h-1zM638 223h1v1h-1zM125 224h1v1h-1zM166 224h1v1h-1zM301 224h1v1h-1zM306 224h1v1h-1zM339 224h1v1h-1zM347 224h1v1h-1zM530 224h1v1h-1zM638 224h1v1h-1zM125 225h1v1h-1zM166 225h1v1h-1zM300 225h1v1h-1zM306 225h1v1h-1zM340 225h1v1h-1zM347 225h1v1h-1zM530 225h1v1h-1zM638 225h1v1h-1zM125 226h1v1h-1zM166 226h1v1h-1zM300 226h1v1h-1zM306 226h1v1h-1zM340 226h1v1h-1zM347 226h1v1h-1zM529 226h2v1h-2zM638 226h1v1h-1zM125 227h1v1h-1zM166 227h1v1h-1zM299 227h1v1h-1zM306 227h1v1h-1zM341 227h1v1h-1zM347 227h1v1h-1zM529 227h1v1h-1zM637 227h1v1h-1zM125 228h1v1h-1zM165 228h2v1h-2zM299 228h1v1h-1zM306 228h1v1h-1zM341 228h1v1h-1zM347 228h1v1h-1zM529 228h1v1h-1zM637 228h1v1h-1zM125 229h1v1h-1zM165 229h1v1h-1zM298 229h1v1h-1zM342 229h1v1h-1zM347 229h1v1h-1zM529 229h1v1h-1zM637 229h1v1h-1zM125 230h1v1h-1zM165 230h1v1h-1zM298 230h1v1h-1zM306 230h1v1h-1zM342 230h1v1h-1zM347 230h1v1h-1zM529 230h1v1h-1zM637 230h1v1h-1zM125 231h1v1h-1zM165 231h1v1h-1zM297 231h1v1h-1zM306 231h1v1h-1zM343 231h1v1h-1zM347 231h1v1h-1zM529 231h1v1h-1zM637 231h1v1h-1zM125 232h1v1h-1zM165 232h1v1h-1zM297 232h1v1h-1zM306 232h1v1h-1zM343 232h1v1h-1zM347 232h1v1h-1zM529 232h1v1h-1zM637 232h1v1h-1zM125 233h1v1h-1zM165 233h1v1h-1zM296 233h1v1h-1zM306 233h1v1h-1zM344 233h1v1h-1zM347 233h1v1h-1zM529 233h1v1h-1zM637 233h1v1h-1zM125 234h1v1h-1zM165 234h1v1h-1zM296 234h1v1h-1zM306 234h1v1h-1zM344 234h1v1h-1zM347 234h1v1h-1zM529 234h1v1h-1zM638 234h1v1h-1zM125 235h1v1h-1zM165 235h1v1h-1zM296 235h1v1h-1zM306 235h1v1h-1zM344 235h1v1h-1zM347 235h1v1h-1zM529 235h1v1h-1zM638 235h1v1h-1zM125 236h1v1h-1zM165 236h1v1h-1zM296 236h1v1h-1zM306 236h1v1h-1zM344 236h1v1h-1zM347 236h1v1h-1zM529 236h1v1h-1zM638 236h1v1h-1zM125 237h1v1h-1zM165 237h1v1h-1zM296 237h1v1h-1zM306 237h1v1h-1zM344 237h1v1h-1zM347 237h2v1h-2zM529 237h1v1h-1zM638 237h1v1h-1zM125 238h1v1h-1zM165 238h1v1h-1zM296 238h1v1h-1zM306 238h1v1h-1zM344 238h1v1h-1zM347 238h1v1h-1zM529 238h1v1h-1zM638 238h1v1h-1zM125 239h1v1h-1zM165 239h1v1h-1zM296 239h1v1h-1zM306 239h1v1h-1zM344 239h1v1h-1zM347 239h1v1h-1zM529 239h1v1h-1zM638 239h1v1h-1zM125 240h1v1h-1zM165 240h1v1h-1zM296 240h1v1h-1zM305 240h1v1h-1zM344 240h1v1h-1zM347 240h1v1h-1zM529 240h1v1h-1zM638 240h1v1h-1zM125 241h1v1h-1zM165 241h1v1h-1zM296 241h1v1h-1zM305 241h1v1h-1zM344 241h1v1h-1zM347 241h1v1h-1zM529 241h1v1h-1zM638 241h1v1h-1zM125 242h1v1h-1zM165 242h1v1h-1zM296 242h1v1h-1zM305 242h1v1h-1zM344 242h1v1h-1zM347 242h1v1h-1zM529 242h1v1h-1zM638 242h1v1h-1zM125 243h1v1h-1zM165 243h1v1h-1zM296 243h1v1h-1zM305 243h1v1h-1zM344 243h1v1h-1zM347 243h1v1h-1zM529 243h1v1h-1zM638 243h1v1h-1zM125 244h1v1h-1zM165 244h1v1h-1zM296 244h1v1h-1zM305 244h1v1h-1zM344 244h1v1h-1zM347 244h1v1h-1zM529 244h1v1h-1zM638 244h1v1h-1zM125 245h1v1h-1zM165 245h1v1h-1zM296 245h1v1h-1zM305 245h1v1h-1zM344 245h1v1h-1zM347 245h1v1h-1zM529 245h1v1h-1zM638 245h1v1h-1zM125 246h1v1h-1zM165 246h1v1h-1zM296 246h1v1h-1zM305 246h1v1h-1zM344 246h1v1h-1zM347 246h1v1h-1zM529 246h1v1h-1zM638 246h1v1h-1zM125 247h1v1h-1zM165 247h1v1h-1zM296 247h1v1h-1zM305 247h1v1h-1zM344 247h1v1h-1zM347 247h1v1h-1zM529 247h1v1h-1zM638 247h1v1h-1zM125 248h1v1h-1zM165 248h1v1h-1zM297 248h1v1h-1zM306 248h1v1h-1zM343 248h1v1h-1zM347 248h1v1h-1zM529 248h1v1h-1zM638 248h1v1h-1zM125 249h1v1h-1zM165 249h1v1h-1zM297 249h1v1h-1zM306 249h1v1h-1zM343 249h1v1h-1zM348 249h1v1h-1zM529 249h1v1h-1zM638 249h1v1h-1zM125 250h1v1h-1zM165 250h2v1h-2zM298 250h1v1h-1zM306 250h1v1h-1zM342 250h1v1h-1zM348 250h1v1h-1zM529 250h1v1h-1zM638 250h1v1h-1zM125 251h1v1h-1zM166 251h1v1h-1zM298 251h1v1h-1zM306 251h1v1h-1zM342 251h1v1h-1zM348 251h1v1h-1zM529 251h1v1h-1zM637 251h1v1h-1zM125 252h1v1h-1zM166 252h1v1h-1zM299 252h1v1h-1zM306 252h1v1h-1zM341 252h1v1h-1zM348 252h1v1h-1zM487 252h1v1h-1zM529 252h1v1h-1zM637 252h1v1h-1zM125 253h1v1h-1zM166 253h1v1h-1zM299 253h1v1h-1zM306 253h1v1h-1zM341 253h1v1h-1zM348 253h1v1h-1zM487 253h1v1h-1zM529 253h1v1h-1zM637 253h1v1h-1zM125 254h1v1h-1zM166 254h1v1h-1zM300 254h1v1h-1zM306 254h1v1h-1zM340 254h1v1h-1zM348 254h1v1h-1zM488 254h1v1h-1zM529 254h1v1h-1zM637 254h1v1h-1zM125 255h1v1h-1zM166 255h1v1h-1zM300 255h1v1h-1zM306 255h1v1h-1zM340 255h1v1h-1zM348 255h1v1h-1zM488 255h1v1h-1zM529 255h1v1h-1zM637 255h1v1h-1zM125 256h1v1h-1zM166 256h1v1h-1zM301 256h1v1h-1zM306 256h1v1h-1zM339 256h1v1h-1zM347 256h1v1h-1zM488 256h1v1h-1zM529 256h1v1h-1zM637 256h1v1h-1zM125 257h1v1h-1zM166 257h1v1h-1zM302 257h1v1h-1zM306 257h1v1h-1zM338 257h1v1h-1zM347 257h1v1h-1zM488 257h1v1h-1zM529 257h1v1h-1zM637 257h1v1h-1zM125 258h1v1h-1zM166 258h1v1h-1zM303 258h1v1h-1zM306 258h1v1h-1zM337 258h1v1h-1zM347 258h1v1h-1zM488 258h1v1h-1zM529 258h1v1h-1zM637 258h1v1h-1zM125 259h1v1h-1zM166 259h1v1h-1zM304 259h1v1h-1zM306 259h1v1h-1zM336 259h1v1h-1zM347 259h1v1h-1zM488 259h1v1h-1zM529 259h1v1h-1zM638 259h1v1h-1zM125 260h1v1h-1zM166 260h1v1h-1zM305 260h2v1h-2zM334 260h2v1h-2zM347 260h1v1h-1zM488 260h1v1h-1zM529 260h1v1h-1zM638 260h1v1h-1zM125 261h1v1h-1zM166 261h1v1h-1zM306 261h3v1h-3zM332 261h2v1h-2zM347 261h1v1h-1zM488 261h1v1h-1zM529 261h1v1h-1zM638 261h1v1h-1zM125 262h1v1h-1zM165 262h2v1h-2zM306 262h1v1h-1zM309 262h2v1h-2zM330 262h2v1h-2zM347 262h1v1h-1zM488 262h1v1h-1zM529 262h1v1h-1zM638 262h1v1h-1zM125 263h1v1h-1zM165 263h1v1h-1zM306 263h1v1h-1zM311 263h2v1h-2zM328 263h2v1h-2zM347 263h1v1h-1zM488 263h1v1h-1zM529 263h1v1h-1zM638 263h1v1h-1zM125 264h1v1h-1zM165 264h1v1h-1zM306 264h1v1h-1zM313 264h15v1h-15zM347 264h1v1h-1zM488 264h1v1h-1zM529 264h1v1h-1zM638 264h1v1h-1zM125 265h1v1h-1zM165 265h1v1h-1zM306 265h1v1h-1zM347 265h1v1h-1zM488 265h1v1h-1zM529 265h1v1h-1zM638 265h1v1h-1zM125 266h2v1h-2zM165 266h1v1h-1zM306 266h1v1h-1zM347 266h1v1h-1zM488 266h1v1h-1zM529 266h1v1h-1zM638 266h1v1h-1zM126 267h1v1h-1zM165 267h1v1h-1zM306 267h1v1h-1zM347 267h1v1h-1zM488 267h1v1h-1zM529 267h1v1h-1zM638 267h1v1h-1zM126 268h1v1h-1zM165 268h1v1h-1zM306 268h1v1h-1zM347 268h1v1h-1zM488 268h1v1h-1zM529 268h1v1h-1zM638 268h1v1h-1zM126 269h1v1h-1zM165 269h1v1h-1zM306 269h1v1h-1zM347 269h1v1h-1zM488 269h1v1h-1zM529 269h1v1h-1zM636 269h2v1h-2zM126 270h1v1h-1zM165 270h1v1h-1zM306 270h1v1h-1zM347 270h1v1h-1zM488 270h1v1h-1zM529 270h1v1h-1zM635 270h1v1h-1zM126 271h1v1h-1zM165 271h1v1h-1zM306 271h1v1h-1zM347 271h1v1h-1zM488 271h1v1h-1zM529 271h2v1h-2zM636 271h1v1h-1zM125 272h1v1h-1zM165 272h1v1h-1zM306 272h1v1h-1zM347 272h1v1h-1zM488 272h1v1h-1zM530 272h1v1h-1zM637 272h1v1h-1zM125 273h1v1h-1zM165 273h1v1h-1zM306 273h1v1h-1zM347 273h1v1h-1zM488 273h1v1h-1zM530 273h1v1h-1zM638 273h1v1h-1zM125 274h1v1h-1zM165 274h1v1h-1zM306 274h1v1h-1zM347 274h1v1h-1zM488 274h2v1h-2zM530 274h1v1h-1zM125 275h1v1h-1zM165 275h1v1h-1zM306 275h1v1h-1zM347 275h1v1h-1zM489 275h1v1h-1zM530 275h1v1h-1zM125 276h1v1h-1zM165 276h1v1h-1zM306 276h1v1h-1zM347 276h1v1h-1zM489 276h1v1h-1zM529 276h1v1h-1zM125 277h1v1h-1zM165 277h1v1h-1zM306 277h1v1h-1zM347 277h1v1h-1zM489 277h1v1h-1zM529 277h1v1h-1zM125 278h1v1h-1zM165 278h1v1h-1zM306 278h1v1h-1zM347 278h1v1h-1zM489 278h1v1h-1zM529 278h1v1h-1zM125 279h1v1h-1zM165 279h1v1h-1zM305 279h1v1h-1zM347 279h1v1h-1zM488 279h1v1h-1zM529 279h1v1h-1zM125 280h1v1h-1zM165 280h1v1h-1zM305 280h1v1h-1zM347 280h1v1h-1zM488 280h1v1h-1zM529 280h1v1h-1zM125 281h1v1h-1zM165 281h2v1h-2zM305 281h1v1h-1zM347 281h1v1h-1zM488 281h1v1h-1zM530 281h1v1h-1zM125 282h1v1h-1zM166 282h1v1h-1zM305 282h1v1h-1zM347 282h1v1h-1zM488 282h1v1h-1zM530 282h1v1h-1zM125 283h1v1h-1zM166 283h1v1h-1zM305 283h1v1h-1zM347 283h1v1h-1zM488 283h1v1h-1zM530 283h1v1h-1zM125 284h1v1h-1zM166 284h1v1h-1zM306 284h1v1h-1zM347 284h1v1h-1zM488 284h1v1h-1zM530 284h1v1h-1zM125 285h1v1h-1zM166 285h1v1h-1zM306 285h1v1h-1zM347 285h1v1h-1zM488 285h1v1h-1zM529 285h2v1h-2zM125 286h1v1h-1zM166 286h1v1h-1zM306 286h1v1h-1zM347 286h1v1h-1zM488 286h1v1h-1zM529 286h1v1h-1zM125 287h1v1h-1zM166 287h1v1h-1zM305 287h1v1h-1zM347 287h1v1h-1zM488 287h1v1h-1zM529 287h1v1h-1zM125 288h1v1h-1zM166 288h1v1h-1zM305 288h1v1h-1zM347 288h1v1h-1zM488 288h1v1h-1zM529 288h1v1h-1zM125 289h1v1h-1zM166 289h1v1h-1zM306 289h1v1h-1zM347 289h1v1h-1zM488 289h1v1h-1zM529 289h1v1h-1zM126 290h1v1h-1zM166 290h1v1h-1zM306 290h1v1h-1zM347 290h1v1h-1zM488 290h2v1h-2zM529 290h1v1h-1zM126 291h1v1h-1zM166 291h1v1h-1zM306 291h1v1h-1zM347 291h1v1h-1zM489 291h1v1h-1zM529 291h1v1h-1zM126 292h1v1h-1zM166 292h1v1h-1zM306 292h1v1h-1zM347 292h1v1h-1zM489 292h1v1h-1zM529 292h1v1h-1zM126 293h1v1h-1zM166 293h1v1h-1zM306 293h1v1h-1zM347 293h1v1h-1zM489 293h1v1h-1zM529 293h1v1h-1zM126 294h1v1h-1zM166 294h1v1h-1zM306 294h1v1h-1zM347 294h1v1h-1zM489 294h1v1h-1zM529 294h1v1h-1zM126 295h1v1h-1zM166 295h1v1h-1zM306 295h1v1h-1zM347 295h1v1h-1zM488 295h1v1h-1zM529 295h1v1h-1zM126 296h1v1h-1zM166 296h1v1h-1zM306 296h1v1h-1zM347 296h1v1h-1zM488 296h1v1h-1zM529 296h1v1h-1zM126 297h1v1h-1zM166 297h1v1h-1zM306 297h1v1h-1zM347 297h1v1h-1zM488 297h1v1h-1zM529 297h1v1h-1zM126 298h1v1h-1zM166 298h1v1h-1zM306 298h1v1h-1zM347 298h1v1h-1zM488 298h1v1h-1zM529 298h1v1h-1zM126 299h1v1h-1zM166 299h1v1h-1zM306 299h1v1h-1zM347 299h1v1h-1zM488 299h1v1h-1zM529 299h1v1h-1zM125 300h2v1h-2zM166 300h1v1h-1zM306 300h1v1h-1zM347 300h1v1h-1zM489 300h1v1h-1zM529 300h1v1h-1zM125 301h1v1h-1zM166 301h1v1h-1zM306 301h1v1h-1zM346 301h1v1h-1zM489 301h1v1h-1zM529 301h1v1h-1zM125 302h1v1h-1zM166 302h1v1h-1zM306 302h1v1h-1zM347 302h1v1h-1zM489 302h1v1h-1zM529 302h1v1h-1zM125 303h1v1h-1zM166 303h1v1h-1zM306 303h1v1h-1zM347 303h1v1h-1zM488 303h2v1h-2zM529 303h1v1h-1zM125 304h1v1h-1zM166 304h1v1h-1zM306 304h1v1h-1zM347 304h1v1h-1zM488 304h1v1h-1zM530 304h1v1h-1zM125 305h1v1h-1zM166 305h1v1h-1zM306 305h1v1h-1zM347 305h1v1h-1zM488 305h1v1h-1zM530 305h1v1h-1zM125 306h1v1h-1zM166 306h1v1h-1zM306 306h1v1h-1zM347 306h1v1h-1zM488 306h1v1h-1zM530 306h1v1h-1zM125 307h1v1h-1zM166 307h1v1h-1zM306 307h1v1h-1zM347 307h1v1h-1zM488 307h1v1h-1zM530 307h1v1h-1zM125 308h1v1h-1zM166 308h1v1h-1zM306 308h1v1h-1zM347 308h1v1h-1zM488 308h1v1h-1zM530 308h1v1h-1zM125 309h1v1h-1zM166 309h1v1h-1zM306 309h1v1h-1zM347 309h1v1h-1zM488 309h1v1h-1zM530 309h1v1h-1zM125 310h1v1h-1zM166 310h2v1h-2zM306 310h1v1h-1zM347 310h1v1h-1zM488 310h1v1h-1zM529 310h2v1h-2zM125 311h1v1h-1zM167 311h1v1h-1zM306 311h1v1h-1zM347 311h1v1h-1zM488 311h1v1h-1zM529 311h1v1h-1zM125 312h1v1h-1zM166 312h2v1h-2zM306 312h1v1h-1zM347 312h1v1h-1zM488 312h1v1h-1zM529 312h2v1h-2zM125 313h1v1h-1zM166 313h1v1h-1zM306 313h1v1h-1zM347 313h1v1h-1zM488 313h1v1h-1zM530 313h1v1h-1zM568 313h1v1h-1zM125 314h1v1h-1zM166 314h1v1h-1zM306 314h1v1h-1zM347 314h1v1h-1zM488 314h1v1h-1zM530 314h1v1h-1zM568 314h1v1h-1zM125 315h1v1h-1zM166 315h1v1h-1zM306 315h1v1h-1zM347 315h1v1h-1zM488 315h1v1h-1zM530 315h1v1h-1zM568 315h1v1h-1zM125 316h1v1h-1zM166 316h1v1h-1zM306 316h1v1h-1zM347 316h1v1h-1zM488 316h1v1h-1zM530 316h1v1h-1zM568 316h1v1h-1zM125 317h1v1h-1zM166 317h1v1h-1zM306 317h1v1h-1zM347 317h1v1h-1zM488 317h1v1h-1zM530 317h1v1h-1zM569 317h1v1h-1zM125 318h1v1h-1zM166 318h1v1h-1zM306 318h1v1h-1zM347 318h1v1h-1zM488 318h1v1h-1zM529 318h2v1h-2zM569 318h1v1h-1zM125 319h1v1h-1zM166 319h1v1h-1zM306 319h1v1h-1zM347 319h1v1h-1zM488 319h1v1h-1zM529 319h1v1h-1zM570 319h1v1h-1zM125 320h1v1h-1zM166 320h1v1h-1zM306 320h1v1h-1zM347 320h1v1h-1zM488 320h1v1h-1zM529 320h1v1h-1zM570 320h1v1h-1zM125 321h1v1h-1zM166 321h1v1h-1zM347 321h1v1h-1zM487 321h2v1h-2zM529 321h1v1h-1zM570 321h1v1h-1zM125 322h1v1h-1zM166 322h1v1h-1zM347 322h1v1h-1zM489 322h1v1h-1zM529 322h1v1h-1zM570 322h1v1h-1zM125 323h1v1h-1zM166 323h1v1h-1zM347 323h1v1h-1zM489 323h1v1h-1zM529 323h1v1h-1zM570 323h1v1h-1zM125 324h1v1h-1zM166 324h1v1h-1zM347 324h1v1h-1zM489 324h1v1h-1zM529 324h1v1h-1zM125 325h2v1h-2zM166 325h1v1h-1zM347 325h1v1h-1zM489 325h1v1h-1zM529 325h1v1h-1zM126 326h1v1h-1zM166 326h1v1h-1zM347 326h1v1h-1zM489 326h1v1h-1zM529 326h1v1h-1zM126 327h1v1h-1zM166 327h1v1h-1zM347 327h1v1h-1zM489 327h1v1h-1zM529 327h1v1h-1zM126 328h1v1h-1zM166 328h1v1h-1zM347 328h1v1h-1zM488 328h1v1h-1zM529 328h1v1h-1zM126 329h1v1h-1zM166 329h1v1h-1zM347 329h1v1h-1zM488 329h1v1h-1zM529 329h1v1h-1zM126 330h1v1h-1zM166 330h1v1h-1zM347 330h1v1h-1zM488 330h2v1h-2zM529 330h1v1h-1zM126 331h1v1h-1zM166 331h1v1h-1zM347 331h1v1h-1zM489 331h1v1h-1zM529 331h1v1h-1zM126 332h1v1h-1zM166 332h1v1h-1zM347 332h1v1h-1zM488 332h2v1h-2zM529 332h1v1h-1zM126 333h1v1h-1zM166 333h1v1h-1zM347 333h1v1h-1zM488 333h1v1h-1zM529 333h1v1h-1zM125 334h2v1h-2zM166 334h1v1h-1zM347 334h1v1h-1zM488 334h1v1h-1zM529 334h1v1h-1zM125 335h1v1h-1zM166 335h1v1h-1zM347 335h1v1h-1zM488 335h1v1h-1zM529 335h1v1h-1zM125 336h1v1h-1zM165 336h2v1h-2zM347 336h1v1h-1zM488 336h1v1h-1zM529 336h1v1h-1zM125 337h1v1h-1zM165 337h1v1h-1zM347 337h1v1h-1zM488 337h1v1h-1zM529 337h1v1h-1zM125 338h1v1h-1zM165 338h1v1h-1zM347 338h1v1h-1zM488 338h1v1h-1zM529 338h1v1h-1zM125 339h1v1h-1zM165 339h1v1h-1zM347 339h1v1h-1zM529 339h1v1h-1zM125 340h1v1h-1zM165 340h2v1h-2zM347 340h1v1h-1zM489 340h1v1h-1zM529 340h1v1h-1zM125 341h1v1h-1zM166 341h1v1h-1zM347 341h1v1h-1zM489 341h1v1h-1zM529 341h1v1h-1zM125 342h1v1h-1zM166 342h1v1h-1zM347 342h1v1h-1zM489 342h1v1h-1zM529 342h1v1h-1zM125 343h1v1h-1zM166 343h1v1h-1zM347 343h1v1h-1zM489 343h1v1h-1zM529 343h1v1h-1zM125 344h1v1h-1zM166 344h1v1h-1zM347 344h1v1h-1zM489 344h1v1h-1zM529 344h1v1h-1zM125 345h1v1h-1zM167 345h1v1h-1zM347 345h1v1h-1zM489 345h1v1h-1zM529 345h1v1h-1zM125 346h1v1h-1zM167 346h1v1h-1zM347 346h1v1h-1zM489 346h1v1h-1zM529 346h1v1h-1zM125 347h1v1h-1zM167 347h1v1h-1zM347 347h1v1h-1zM488 347h1v1h-1zM529 347h1v1h-1zM125 348h1v1h-1zM167 348h1v1h-1zM347 348h1v1h-1zM488 348h1v1h-1zM529 348h1v1h-1zM125 349h2v1h-2zM167 349h1v1h-1zM347 349h1v1h-1zM488 349h2v1h-2zM529 349h1v1h-1zM638 349h1v1h-1zM126 350h1v1h-1zM167 350h1v1h-1zM347 350h1v1h-1zM489 350h1v1h-1zM529 350h1v1h-1zM636 350h2v1h-2zM126 351h1v1h-1zM167 351h1v1h-1zM347 351h1v1h-1zM489 351h1v1h-1zM529 351h1v1h-1zM635 351h1v1h-1zM637 351h1v1h-1zM126 352h1v1h-1zM167 352h1v1h-1zM347 352h1v1h-1zM489 352h1v1h-1zM529 352h1v1h-1zM638 352h1v1h-1zM126 353h1v1h-1zM167 353h1v1h-1zM347 353h1v1h-1zM488 353h2v1h-2zM529 353h1v1h-1zM638 353h1v1h-1zM126 354h1v1h-1zM167 354h1v1h-1zM347 354h1v1h-1zM488 354h1v1h-1zM529 354h1v1h-1zM638 354h1v1h-1zM126 355h1v1h-1zM167 355h1v1h-1zM347 355h1v1h-1zM488 355h1v1h-1zM529 355h1v1h-1zM638 355h1v1h-1zM126 356h1v1h-1zM166 356h2v1h-2zM347 356h1v1h-1zM488 356h1v1h-1zM529 356h1v1h-1zM638 356h1v1h-1zM126 357h1v1h-1zM166 357h1v1h-1zM347 357h1v1h-1zM488 357h2v1h-2zM529 357h1v1h-1zM638 357h1v1h-1zM126 358h1v1h-1zM166 358h1v1h-1zM347 358h1v1h-1zM489 358h1v1h-1zM529 358h1v1h-1zM638 358h1v1h-1zM126 359h1v1h-1zM166 359h1v1h-1zM347 359h1v1h-1zM489 359h1v1h-1zM529 359h1v1h-1zM638 359h1v1h-1zM126 360h1v1h-1zM166 360h1v1h-1zM347 360h1v1h-1zM489 360h1v1h-1zM529 360h1v1h-1zM638 360h1v1h-1zM126 361h1v1h-1zM166 361h1v1h-1zM347 361h1v1h-1zM488 361h2v1h-2zM529 361h1v1h-1zM637 361h1v1h-1zM126 362h1v1h-1zM166 362h1v1h-1zM347 362h1v1h-1zM488 362h1v1h-1zM529 362h1v1h-1zM637 362h1v1h-1zM126 363h1v1h-1zM166 363h1v1h-1zM347 363h1v1h-1zM488 363h1v1h-1zM529 363h1v1h-1zM637 363h1v1h-1zM126 364h1v1h-1zM166 364h1v1h-1zM347 364h1v1h-1zM488 364h1v1h-1zM529 364h1v1h-1zM637 364h1v1h-1zM126 365h1v1h-1zM165 365h2v1h-2zM347 365h2v1h-2zM488 365h1v1h-1zM529 365h1v1h-1zM637 365h1v1h-1zM126 366h1v1h-1zM165 366h1v1h-1zM348 366h1v1h-1zM488 366h1v1h-1zM529 366h1v1h-1zM637 366h1v1h-1zM126 367h1v1h-1zM165 367h1v1h-1zM348 367h1v1h-1zM489 367h1v1h-1zM529 367h1v1h-1zM637 367h1v1h-1zM126 368h1v1h-1zM165 368h1v1h-1zM348 368h1v1h-1zM489 368h1v1h-1zM529 368h1v1h-1zM637 368h1v1h-1zM126 369h1v1h-1zM165 369h1v1h-1zM348 369h1v1h-1zM489 369h1v1h-1zM529 369h1v1h-1zM637 369h1v1h-1zM126 370h1v1h-1zM165 370h2v1h-2zM348 370h1v1h-1zM489 370h1v1h-1zM529 370h1v1h-1zM637 370h1v1h-1zM126 371h1v1h-1zM166 371h1v1h-1zM348 371h1v1h-1zM489 371h1v1h-1zM529 371h1v1h-1zM126 372h1v1h-1zM166 372h1v1h-1zM347 372h1v1h-1zM489 372h1v1h-1zM529 372h1v1h-1zM126 373h1v1h-1zM166 373h1v1h-1zM347 373h1v1h-1zM489 373h1v1h-1zM529 373h1v1h-1zM126 374h1v1h-1zM166 374h1v1h-1zM347 374h1v1h-1zM489 374h1v1h-1zM529 374h1v1h-1zM126 375h1v1h-1zM166 375h1v1h-1zM347 375h1v1h-1zM489 375h1v1h-1zM529 375h1v1h-1zM126 376h1v1h-1zM166 376h1v1h-1zM347 376h1v1h-1zM489 376h1v1h-1zM529 376h1v1h-1zM126 377h1v1h-1zM166 377h1v1h-1zM347 377h1v1h-1zM489 377h1v1h-1zM529 377h1v1h-1zM126 378h1v1h-1zM166 378h1v1h-1zM347 378h1v1h-1zM489 378h1v1h-1zM529 378h1v1h-1zM126 379h1v1h-1zM166 379h1v1h-1zM347 379h1v1h-1zM489 379h1v1h-1zM529 379h1v1h-1zM126 380h1v1h-1zM166 380h1v1h-1zM347 380h1v1h-1zM489 380h1v1h-1zM529 380h1v1h-1zM126 381h1v1h-1zM166 381h1v1h-1zM347 381h1v1h-1zM489 381h1v1h-1zM529 381h1v1h-1zM126 382h1v1h-1zM166 382h1v1h-1zM347 382h1v1h-1zM489 382h1v1h-1zM529 382h1v1h-1zM126 383h1v1h-1zM166 383h1v1h-1zM348 383h1v1h-1zM489 383h1v1h-1zM529 383h1v1h-1zM126 384h1v1h-1zM166 384h1v1h-1zM348 384h1v1h-1zM489 384h1v1h-1zM529 384h1v1h-1zM126 385h1v1h-1zM166 385h1v1h-1zM347 385h1v1h-1zM489 385h1v1h-1zM529 385h1v1h-1zM126 386h1v1h-1zM166 386h1v1h-1zM347 386h1v1h-1zM489 386h1v1h-1zM529 386h1v1h-1zM126 387h1v1h-1zM166 387h1v1h-1zM347 387h1v1h-1zM489 387h1v1h-1zM529 387h1v1h-1zM126 388h2v1h-2zM166 388h1v1h-1zM347 388h1v1h-1zM489 388h1v1h-1zM529 388h1v1h-1zM127 389h1v1h-1zM166 389h1v1h-1zM347 389h1v1h-1zM489 389h1v1h-1zM529 389h1v1h-1zM127 390h1v1h-1zM166 390h1v1h-1zM347 390h1v1h-1zM489 390h1v1h-1zM529 390h1v1h-1zM127 391h1v1h-1zM166 391h2v1h-2zM347 391h1v1h-1zM488 391h2v1h-2zM529 391h1v1h-1zM127 392h1v1h-1zM167 392h1v1h-1zM347 392h1v1h-1zM489 392h1v1h-1zM529 392h1v1h-1zM167 393h1v1h-1zM347 393h1v1h-1zM489 393h1v1h-1zM529 393h1v1h-1zM167 394h1v1h-1zM347 394h1v1h-1zM489 394h1v1h-1zM529 394h1v1h-1zM166 395h2v1h-2zM347 395h1v1h-1zM489 395h1v1h-1zM529 395h1v1h-1zM166 396h1v1h-1zM347 396h1v1h-1zM489 396h1v1h-1zM529 396h1v1h-1zM166 397h1v1h-1zM347 397h1v1h-1zM489 397h1v1h-1zM529 397h1v1h-1zM166 398h1v1h-1zM347 398h1v1h-1zM489 398h1v1h-1zM529 398h1v1h-1zM166 399h1v1h-1zM347 399h1v1h-1zM489 399h1v1h-1zM529 399h1v1h-1zM166 400h1v1h-1zM347 400h1v1h-1zM489 400h1v1h-1zM529 400h1v1h-1zM166 401h1v1h-1zM347 401h1v1h-1zM489 401h1v1h-1zM529 401h1v1h-1zM166 402h1v1h-1zM347 402h1v1h-1zM489 402h1v1h-1zM529 402h1v1h-1zM166 403h1v1h-1zM347 403h1v1h-1zM489 403h1v1h-1zM529 403h1v1h-1zM166 404h1v1h-1zM347 404h1v1h-1zM489 404h1v1h-1zM529 404h1v1h-1zM166 405h1v1h-1zM347 405h2v1h-2zM489 405h1v1h-1zM529 405h1v1h-1zM166 406h1v1h-1zM348 406h1v1h-1zM489 406h1v1h-1zM529 406h1v1h-1zM166 407h1v1h-1zM348 407h1v1h-1zM489 407h1v1h-1zM529 407h1v1h-1zM166 408h1v1h-1zM348 408h1v1h-1zM489 408h1v1h-1zM529 408h1v1h-1zM166 409h1v1h-1zM347 409h1v1h-1zM489 409h1v1h-1zM529 409h1v1h-1zM166 410h1v1h-1zM347 410h1v1h-1zM489 410h1v1h-1zM529 410h1v1h-1zM166 411h1v1h-1zM347 411h1v1h-1zM489 411h1v1h-1zM529 411h1v1h-1zM166 412h1v1h-1zM347 412h1v1h-1zM489 412h1v1h-1zM529 412h1v1h-1zM166 413h1v1h-1zM347 413h1v1h-1zM489 413h1v1h-1zM529 413h1v1h-1zM166 414h1v1h-1zM347 414h1v1h-1zM489 414h1v1h-1zM529 414h2v1h-2zM166 415h1v1h-1zM347 415h1v1h-1zM489 415h1v1h-1zM530 415h1v1h-1zM166 416h1v1h-1zM307 416h1v1h-1zM347 416h1v1h-1zM489 416h1v1h-1zM530 416h1v1h-1zM166 417h1v1h-1zM306 417h1v1h-1zM347 417h1v1h-1zM486 417h1v1h-1zM489 417h1v1h-1zM530 417h1v1h-1zM166 418h1v1h-1zM306 418h1v1h-1zM347 418h1v1h-1zM485 418h1v1h-1zM489 418h1v1h-1zM530 418h1v1h-1zM638 418h1v1h-1zM166 419h1v1h-1zM306 419h1v1h-1zM347 419h1v1h-1zM485 419h1v1h-1zM489 419h1v1h-1zM530 419h1v1h-1zM638 419h1v1h-1zM166 420h1v1h-1zM306 420h1v1h-1zM347 420h1v1h-1zM485 420h1v1h-1zM489 420h1v1h-1zM530 420h1v1h-1zM638 420h1v1h-1zM166 421h1v1h-1zM307 421h1v1h-1zM347 421h1v1h-1zM486 421h1v1h-1zM489 421h1v1h-1zM530 421h1v1h-1zM638 421h1v1h-1zM166 422h1v1h-1zM307 422h1v1h-1zM347 422h1v1h-1zM486 422h4v1h-4zM530 422h1v1h-1zM638 422h1v1h-1zM165 423h2v1h-2zM307 423h1v1h-1zM347 423h1v1h-1zM489 423h1v1h-1zM530 423h1v1h-1zM638 423h1v1h-1zM29 424h1v1h-1zM165 424h1v1h-1zM307 424h1v1h-1zM347 424h1v1h-1zM489 424h1v1h-1zM530 424h1v1h-1zM638 424h1v1h-1zM30 425h1v1h-1zM165 425h1v1h-1zM307 425h1v1h-1zM347 425h2v1h-2zM489 425h1v1h-1zM530 425h1v1h-1zM638 425h1v1h-1zM30 426h1v1h-1zM165 426h1v1h-1zM307 426h1v1h-1zM348 426h1v1h-1zM489 426h1v1h-1zM530 426h1v1h-1zM638 426h1v1h-1zM30 427h1v1h-1zM165 427h1v1h-1zM307 427h1v1h-1zM348 427h1v1h-1zM489 427h1v1h-1zM530 427h1v1h-1zM638 427h1v1h-1zM31 428h1v1h-1zM125 428h2v1h-2zM165 428h2v1h-2zM307 428h1v1h-1zM348 428h1v1h-1zM488 428h2v1h-2zM529 428h2v1h-2zM638 428h1v1h-1zM18 429h2v1h-2zM31 429h1v1h-1zM126 429h1v1h-1zM166 429h1v1h-1zM307 429h1v1h-1zM348 429h1v1h-1zM488 429h1v1h-1zM529 429h1v1h-1zM638 429h1v1h-1zM20 430h8v1h-8zM31 430h1v1h-1zM89 430h1v1h-1zM127 430h1v1h-1zM166 430h1v1h-1zM307 430h1v1h-1zM348 430h1v1h-1zM488 430h1v1h-1zM529 430h1v1h-1zM638 430h1v1h-1zM28 431h4v1h-4zM89 431h1v1h-1zM127 431h1v1h-1zM166 431h1v1h-1zM307 431h1v1h-1zM347 431h1v1h-1zM529 431h1v1h-1zM562 431h9v1h-9zM590 431h2v1h-2zM593 431h5v1h-5zM614 431h3v1h-3zM638 431h1v1h-1zM24 432h4v1h-4zM31 432h1v1h-1zM89 432h1v1h-1zM126 432h1v1h-1zM166 432h1v1h-1zM307 432h1v1h-1zM347 432h1v1h-1zM529 432h2v1h-2zM561 432h1v1h-1zM571 432h5v1h-5zM580 432h10v1h-10zM598 432h16v1h-16zM638 432h1v1h-1zM28 433h1v1h-1zM89 433h1v1h-1zM126 433h1v1h-1zM166 433h1v1h-1zM308 433h1v1h-1zM347 433h1v1h-1zM530 433h1v1h-1zM561 433h1v1h-1zM576 433h4v1h-4zM638 433h1v1h-1zM29 434h1v1h-1zM90 434h1v1h-1zM126 434h1v1h-1zM167 434h1v1h-1zM304 434h4v1h-4zM309 434h1v1h-1zM347 434h1v1h-1zM530 434h1v1h-1zM561 434h1v1h-1zM577 434h1v1h-1zM638 434h1v1h-1zM29 435h1v1h-1zM90 435h1v1h-1zM126 435h1v1h-1zM167 435h1v1h-1zM304 435h1v1h-1zM309 435h1v1h-1zM347 435h1v1h-1zM530 435h1v1h-1zM561 435h1v1h-1zM563 435h1v1h-1zM577 435h1v1h-1zM638 435h1v1h-1zM29 436h1v1h-1zM35 436h9v1h-9zM90 436h1v1h-1zM124 436h2v1h-2zM167 436h1v1h-1zM205 436h3v1h-3zM211 436h3v1h-3zM231 436h2v1h-2zM238 436h6v1h-6zM304 436h1v1h-1zM306 436h1v1h-1zM309 436h1v1h-1zM347 436h1v1h-1zM385 436h14v1h-14zM408 436h8v1h-8zM431 436h4v1h-4zM530 436h1v1h-1zM564 436h2v1h-2zM572 436h4v1h-4zM578 436h2v1h-2zM638 436h1v1h-1zM30 437h6v1h-6zM44 437h5v1h-5zM70 437h4v1h-4zM78 437h4v1h-4zM85 437h5v1h-5zM91 437h1v1h-1zM125 437h1v1h-1zM167 437h1v1h-1zM206 437h5v1h-5zM214 437h3v1h-3zM233 437h6v1h-6zM244 437h1v1h-1zM306 437h1v1h-1zM309 437h1v1h-1zM347 437h2v1h-2zM354 437h1v1h-1zM385 437h1v1h-1zM399 437h1v1h-1zM407 437h1v1h-1zM416 437h16v1h-16zM435 437h7v1h-7zM530 437h1v1h-1zM566 437h1v1h-1zM580 437h1v1h-1zM638 437h1v1h-1zM31 438h1v1h-1zM48 438h12v1h-12zM61 438h6v1h-6zM69 438h1v1h-1zM74 438h1v1h-1zM76 438h2v1h-2zM82 438h4v1h-4zM92 438h2v1h-2zM126 438h1v1h-1zM167 438h1v1h-1zM205 438h1v1h-1zM217 438h1v1h-1zM238 438h1v1h-1zM306 438h1v1h-1zM309 438h1v1h-1zM348 438h1v1h-1zM354 438h1v1h-1zM385 438h1v1h-1zM400 438h1v1h-1zM406 438h1v1h-1zM436 438h1v1h-1zM442 438h3v1h-3zM530 438h1v1h-1zM567 438h5v1h-5zM581 438h5v1h-5zM604 438h1v1h-1zM629 438h4v1h-4zM638 438h1v1h-1zM39 439h1v1h-1zM60 439h1v1h-1zM66 439h1v1h-1zM69 439h1v1h-1zM89 439h1v1h-1zM94 439h1v1h-1zM127 439h1v1h-1zM167 439h1v1h-1zM205 439h1v1h-1zM214 439h1v1h-1zM306 439h1v1h-1zM309 439h1v1h-1zM348 439h1v1h-1zM354 439h1v1h-1zM385 439h1v1h-1zM400 439h1v1h-1zM406 439h1v1h-1zM436 439h1v1h-1zM444 439h1v1h-1zM530 439h1v1h-1zM572 439h1v1h-1zM580 439h1v1h-1zM586 439h1v1h-1zM605 439h1v1h-1zM633 439h1v1h-1zM638 439h1v1h-1zM19 440h4v1h-4zM39 440h1v1h-1zM66 440h1v1h-1zM69 440h1v1h-1zM71 440h3v1h-3zM89 440h1v1h-1zM94 440h1v1h-1zM126 440h1v1h-1zM167 440h1v1h-1zM205 440h1v1h-1zM214 440h1v1h-1zM254 440h6v1h-6zM306 440h1v1h-1zM349 440h1v1h-1zM354 440h1v1h-1zM385 440h1v1h-1zM400 440h2v1h-2zM406 440h1v1h-1zM417 440h11v1h-11zM436 440h1v1h-1zM444 440h1v1h-1zM530 440h1v1h-1zM573 440h1v1h-1zM579 440h1v1h-1zM587 440h5v1h-5zM606 440h1v1h-1zM624 440h1v1h-1zM634 440h1v1h-1zM638 440h1v1h-1zM40 441h1v1h-1zM51 441h3v1h-3zM65 441h1v1h-1zM67 441h4v1h-4zM75 441h14v1h-14zM94 441h1v1h-1zM126 441h1v1h-1zM167 441h1v1h-1zM204 441h11v1h-11zM253 441h2v1h-2zM306 441h1v1h-1zM349 441h2v1h-2zM354 441h1v1h-1zM374 441h1v1h-1zM386 441h5v1h-5zM399 441h1v1h-1zM402 441h1v1h-1zM407 441h10v1h-10zM428 441h17v1h-17zM530 441h1v1h-1zM573 441h6v1h-6zM607 441h1v1h-1zM613 441h12v1h-12zM635 441h1v1h-1zM638 441h1v1h-1zM16 442h3v1h-3zM20 442h3v1h-3zM40 442h11v1h-11zM53 442h12v1h-12zM67 442h1v1h-1zM73 442h1v1h-1zM94 442h1v1h-1zM125 442h1v1h-1zM168 442h1v1h-1zM252 442h1v1h-1zM255 442h3v1h-3zM306 442h1v1h-1zM351 442h1v1h-1zM354 442h1v1h-1zM363 442h1v1h-1zM374 442h1v1h-1zM388 442h1v1h-1zM391 442h8v1h-8zM447 442h1v1h-1zM459 442h2v1h-2zM530 442h1v1h-1zM608 442h5v1h-5zM624 442h1v1h-1zM636 442h3v1h-3zM74 443h1v1h-1zM94 443h1v1h-1zM123 443h2v1h-2zM169 443h2v1h-2zM208 443h2v1h-2zM249 443h3v1h-3zM258 443h2v1h-2zM301 443h5v1h-5zM352 443h1v1h-1zM354 443h1v1h-1zM363 443h12v1h-12zM381 443h7v1h-7zM447 443h1v1h-1zM458 443h1v1h-1zM531 443h5v1h-5zM75 444h11v1h-11zM91 444h3v1h-3zM110 444h6v1h-6zM121 444h2v1h-2zM171 444h5v1h-5zM182 444h6v1h-6zM193 444h15v1h-15zM260 444h15v1h-15zM293 444h1v1h-1zM296 444h5v1h-5zM353 444h10v1h-10zM375 444h6v1h-6zM413 444h18v1h-18zM442 444h16v1h-16zM536 444h12v1h-12zM550 444h11v1h-11zM109 445h1v1h-1zM116 445h5v1h-5zM176 445h6v1h-6zM188 445h5v1h-5zM294 445h2v1h-2zM431 445h11v1h-11zM548 445h3v1h-3z"/>
</g>
<g fill="#fff" shape-rendering="crispEdges"><rect x="320" y="0" width="1" height="480"/><rect x="0" y="240" width="640" height="1"/></g>
<g fill="none" stroke="#fff" stroke-width="1">

</g>
</svg></div>
<div class="spin" style="left:14px;border-color:#2f74ad"><div class="v">400</div><div class="caret"></div><div class="btn"><div class="up"></div><div class="dn"></div></div></div>
<div class="spin" style="left:337px"><div class="v" style="left:4.4px">500</div><div class="btn"><div class="up" style="border-bottom-color:#aaa"></div><div class="dn"></div></div></div>
</body></html>
